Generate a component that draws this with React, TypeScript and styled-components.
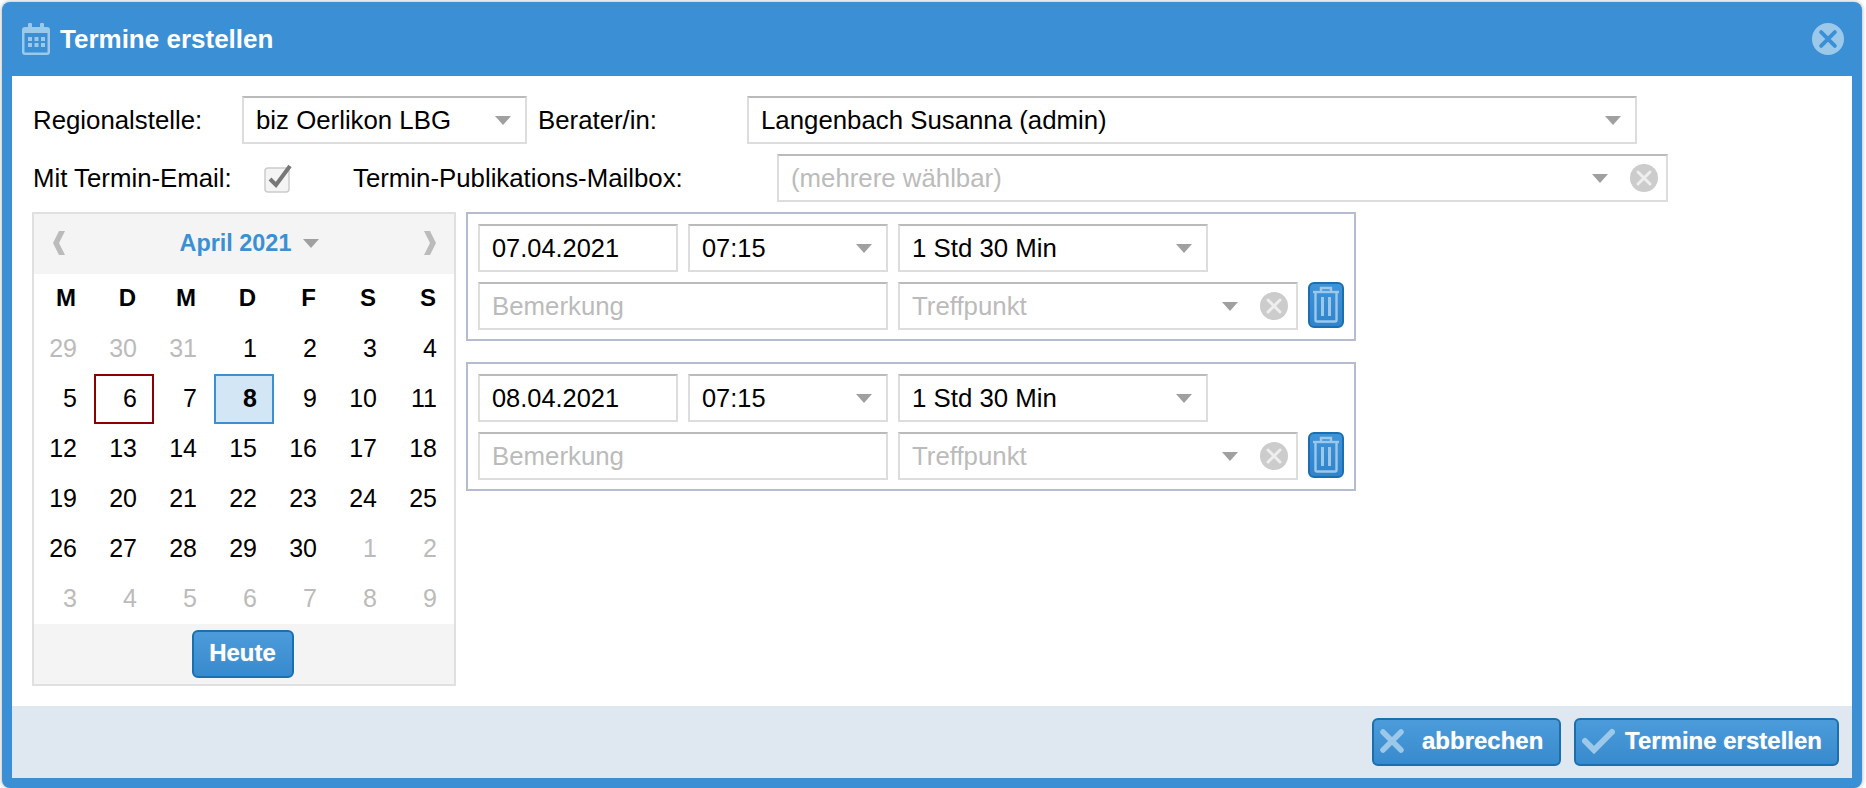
import styled, { createGlobalStyle } from "styled-components";

const GlobalStyle = createGlobalStyle`
  html, body {
    margin: 0;
    padding: 0;
    background: #fff;
  }
  body {
    font-family: "Liberation Sans", Arial, sans-serif;
    font-size: 25.8px;
    color: #000;
  }
  * {
    box-sizing: border-box;
  }
`;

const Dialog = styled.div`
  width: 1860px;
  height: 786px;
  margin: 2px 0 0 2px;
  display: flex;
  flex-direction: column;
  padding: 0 10px 10px;
  background: #3b90d5;
  border-radius: 8px;
  box-shadow: 0 0 4px rgba(0, 0, 0, 0.35);
`;
const TitleBar = styled.header`
  height: 74px;
  flex: none;
  display: flex;
  align-items: center;
  padding-left: 10px;
  padding-right: 8px;
`;
const Title = styled.h1`
  flex: 1;
  margin: 0 0 0 10px;
  font-size: 26px;
  font-weight: bold;
  color: #fff;
`;
const Content = styled.main`
  flex: 1;
  background: #fff;
  padding: 20px;
  display: flex;
  flex-direction: column;
  gap: 10px;
`;
const Row = styled.div`
  display: flex;
  align-items: center;
  height: 48px;
`;
const Label = styled.label<{ $width: number; $gapLeft?: number; $flush?: boolean }>`
  width: ${(props) => props.$width}px;
  flex: none;
  margin-left: ${(props) => props.$gapLeft ?? 0}px;
  padding-left: ${(props) => (props.$flush ? 0 : 1)}px;
`;
const Field = styled.div<{ $width: number }>`
  width: ${(props) => props.$width}px;
  height: 48px;
  flex: none;
  display: flex;
  align-items: center;
  padding: 0 14px 0 12px;
  background: #fff;
  border: 2px solid #ddd;
  border-top-color: #bbb;
`;
const SelectField = styled(Field)<{ $clearable?: boolean }>`
  padding-right: ${(props) => (props.$clearable ? "8px" : "14px")};
`;
const FieldText = styled.span<{ $placeholder?: boolean }>`
  flex: 1;
  color: ${(props) => (props.$placeholder ? "#bbb" : "#000")};
  white-space: nowrap;
`;
const DateText = styled(FieldText)`
  font-size: 25.4px;
`;
const Arrow = styled.span`
  width: 0;
  height: 0;
  flex: none;
  border-left: 8px solid transparent;
  border-right: 8px solid transparent;
  border-top: 9px solid #a0a0a0;
`;
const ClearSvg = styled.svg`
  width: 28px;
  height: 28px;
  flex: none;
  margin-left: 22px;
`;
const CloseSvg = styled.svg`
  width: 32px;
  height: 32px;
  flex: none;
`;
const CheckSvg = styled.svg`
  width: 28px;
  height: 30px;
  flex: none;
  margin-right: 61px;
`;
const Columns = styled.div`
  display: flex;
  align-items: flex-start;
  gap: 10px;
`;

const Calendar = styled.section`
  width: 424px;
  flex: none;
  border: 2px solid #e0e0e0;
`;
const CalendarHead = styled.div`
  height: 60px;
  display: flex;
  align-items: center;
  justify-content: space-between;
  padding: 0 17px 2px 18px;
  background: #f4f4f4;
`;
const MonthLabel = styled.div`
  display: flex;
  align-items: center;
  gap: 12px;
  margin-left: 10px;
  font-size: 23.4px;
  font-weight: bold;
  color: #3b90d5;
`;
const DayGrid = styled.div`
  display: grid;
  grid-template-columns: repeat(7, 60px);
  grid-auto-rows: 50px;
  font-size: 25px;
`;
const WeekDay = styled.div`
  display: flex;
  align-items: center;
  justify-content: flex-end;
  padding: 0 18px 2px 0;
  font-size: 24px;
  font-weight: bold;
`;
const Day = styled.div<{ $muted?: boolean; $today?: boolean; $selected?: boolean }>`
  display: flex;
  align-items: center;
  justify-content: flex-end;
  padding: 0 15px 2px 0;
  color: ${(props) => (props.$muted ? "#bbb" : "#000")};
  font-weight: ${(props) => (props.$selected ? "bold" : "normal")};
  background: ${(props) => (props.$selected ? "#d3e6f5" : "transparent")};
  border: 2px solid
    ${(props) =>
      props.$selected ? "#3b90d5" : props.$today ? "#8b0000" : "transparent"};
`;
const CalendarFoot = styled.div`
  height: 60px;
  display: flex;
  align-items: center;
  justify-content: center;
  padding-right: 3px;
  background: #f4f4f4;
`;
const BlueButton = styled.button`
  height: 48px;
  display: flex;
  align-items: center;
  padding: 0 0 2px;
  font-family: inherit;
  font-size: 24px;
  font-weight: bold;
  color: #fff;
  text-shadow: 0 0 1px rgba(255, 255, 255, 0.6);
  background: linear-gradient(#4c9cdb, #378acd);
  border: 2px solid #1a6fb0;
  border-radius: 6px;
`;
const TodayButton = styled(BlueButton)`
  width: 102px;
  justify-content: center;
`;

const Appointments = styled.div`
  display: flex;
  flex-direction: column;
  gap: 21px;
`;
const Appointment = styled.section`
  width: 890px;
  height: 129px;
  display: flex;
  flex-direction: column;
  gap: 10px;
  padding: 10px;
  border: 2px solid #b5bbd1;
`;
const AppointmentRow = styled.div`
  display: flex;
  gap: 10px;
`;
const TrashButton = styled(BlueButton)`
  width: 36px;
  height: 46px;
  justify-content: center;
  padding: 0;
  background: linear-gradient(#3f93d8, #2f84cc);
`;
const Footer = styled.footer`
  height: 72px;
  flex: none;
  display: flex;
  align-items: center;
  justify-content: flex-end;
  gap: 13px;
  padding-right: 13px;
  background: #dfe8f1;
`;
const FooterButton = styled(BlueButton)<{ $width: number; $gap: number }>`
  width: ${(props) => props.$width}px;
  gap: ${(props) => props.$gap}px;
  padding-left: 6px;
`;

const ClearIcon = () => (
  <ClearSvg viewBox="0 0 28 28">
    <circle cx="14" cy="14" r="14" fill="#ccc" />
    <path d="M8 8 L20 20 M20 8 L8 20" stroke="#eee" strokeWidth="3" strokeLinecap="round" />
  </ClearSvg>
);

const CloseIcon = () => (
  <CloseSvg viewBox="0 0 28 28">
    <circle cx="14" cy="14" r="14" fill="#9cc8ea" />
    <path d="M8 8 L20 20 M20 8 L8 20" stroke="#3b90d5" strokeWidth="3.4" strokeLinecap="round" />
  </CloseSvg>
);

const CalendarIcon = () => (
  <svg width="28" height="32" viewBox="0 0 28 32">
    <rect x="0" y="4" width="28" height="28" rx="3" fill="#9cc8ea" />
    <rect x="6" y="0" width="4" height="7" rx="1" fill="#9cc8ea" />
    <rect x="18" y="0" width="4" height="7" rx="1" fill="#9cc8ea" />
    <rect x="2.5" y="10" width="23" height="19.5" fill="#3b90d5" />
    {[6, 12.5, 19].map((x) =>
      [14, 20].map((y) => (
        <rect key={`${x}-${y}`} x={x} y={y} width="4" height="4" fill="#9cc8ea" />
      ))
    )}
  </svg>
);

const Chevron = ({ left }: { left?: boolean }) => (
  <svg width="14" height="26" viewBox="0 0 14 26">
    <path
      d={
        left
          ? "M7 1 H13 L7 13 L13 25 H7 L1 13 Z"
          : "M7 1 H1 L7 13 L1 25 H7 L13 13 Z"
      }
      fill="#bbb"
    />
  </svg>
);

const TrashIcon = () => (
  <svg width="28" height="38" viewBox="0 0 28 38">
    <g fill="none" stroke="#9cc8ea" strokeWidth="2.4">
      <path d="M9 5 V2 H19 V5" />
      <path d="M1 6 H27" />
      <path d="M3.5 7 V34 Q3.5 35.5 5 35.5 H23 Q24.5 35.5 24.5 34 V7" />
      <path d="M10.5 11 V30 M17.5 11 V30" strokeWidth="3" />
    </g>
  </svg>
);

const CrossIcon = () => (
  <svg width="24" height="24" viewBox="0 0 24 24">
    <path d="M3 3 L21 21 M21 3 L3 21" stroke="#9cc8ea" strokeWidth="5.5" strokeLinecap="round" />
  </svg>
);

const TickIcon = () => (
  <svg width="33" height="26" viewBox="0 0 33 26">
    <path d="M3 13 L12 22 L30 4" fill="none" stroke="#9cc8ea" strokeWidth="6" strokeLinecap="round" />
  </svg>
);

const weekDays = ["M", "D", "M", "D", "F", "S", "S"];
const days: { n: number; muted?: boolean; today?: boolean; selected?: boolean }[] = [
  ...[29, 30, 31].map((n) => ({ n, muted: true })),
  ...Array.from({ length: 30 }, (_, i) => ({
    n: i + 1,
    today: i + 1 === 6,
    selected: i + 1 === 8,
  })),
  ...[1, 2, 3, 4, 5, 6, 7, 8, 9].map((n) => ({ n, muted: true })),
];

function AppointmentBox({ date }: { date: string }) {
  return (
    <Appointment>
      <AppointmentRow>
        <Field $width={200}>
          <DateText>{date}</DateText>
        </Field>
        <SelectField $width={200}>
          <DateText>07:15</DateText>
          <Arrow />
        </SelectField>
        <SelectField $width={310}>
          <FieldText>1 Std 30 Min</FieldText>
          <Arrow />
        </SelectField>
      </AppointmentRow>
      <AppointmentRow>
        <Field $width={410}>
          <FieldText $placeholder>Bemerkung</FieldText>
        </Field>
        <SelectField $width={400} $clearable>
          <FieldText $placeholder>Treffpunkt</FieldText>
          <Arrow />
          <ClearIcon />
        </SelectField>
        <TrashButton>
          <TrashIcon />
        </TrashButton>
      </AppointmentRow>
    </Appointment>
  );
}

export default function App() {
  return (
    <>
      <GlobalStyle />
      <Dialog>
        <TitleBar>
          <CalendarIcon />
          <Title>Termine erstellen</Title>
          <CloseIcon />
        </TitleBar>
        <Content>
          <Row>
            <Label $width={210}>Regionalstelle:</Label>
            <SelectField $width={285}>
              <FieldText>biz Oerlikon LBG</FieldText>
              <Arrow />
            </SelectField>
            <Label $width={210} $gapLeft={10}>
              Berater/in:
            </Label>
            <SelectField $width={890}>
              <FieldText>Langenbach Susanna (admin)</FieldText>
              <Arrow />
            </SelectField>
          </Row>
          <Row>
            <Label $width={232}>Mit Termin-Email:</Label>
            <CheckSvg viewBox="0 0 28 30">
              <rect x="1" y="5" width="24" height="24" rx="3" fill="#f4f4f4" stroke="#ccc" strokeWidth="1.5" />
              <path d="M6 16 L12 22 L26 3" fill="none" stroke="#777" strokeWidth="4" />
            </CheckSvg>
            <Label $width={424} $flush>
              Termin-Publikations-Mailbox:
            </Label>
            <SelectField $width={891} $clearable>
              <FieldText $placeholder>(mehrere wählbar)</FieldText>
              <Arrow />
              <ClearIcon />
            </SelectField>
          </Row>
          <Columns>
            <Calendar>
              <CalendarHead>
                <Chevron left />
                <MonthLabel>
                  April 2021
                  <Arrow />
                </MonthLabel>
                <Chevron />
              </CalendarHead>
              <DayGrid>
                {weekDays.map((d, i) => (
                  <WeekDay key={i}>{d}</WeekDay>
                ))}
                {days.map((d, i) => (
                  <Day key={i} $muted={d.muted} $today={d.today} $selected={d.selected}>
                    {d.n}
                  </Day>
                ))}
              </DayGrid>
              <CalendarFoot>
                <TodayButton>Heute</TodayButton>
              </CalendarFoot>
            </Calendar>
            <Appointments>
              <AppointmentBox date="07.04.2021" />
              <AppointmentBox date="08.04.2021" />
            </Appointments>
          </Columns>
        </Content>
        <Footer>
          <FooterButton $width={189} $gap={18}>
            <CrossIcon />
            abbrechen
          </FooterButton>
          <FooterButton $width={265} $gap={10}>
            <TickIcon />
            Termine erstellen
          </FooterButton>
        </Footer>
      </Dialog>
    </>
  );
}
